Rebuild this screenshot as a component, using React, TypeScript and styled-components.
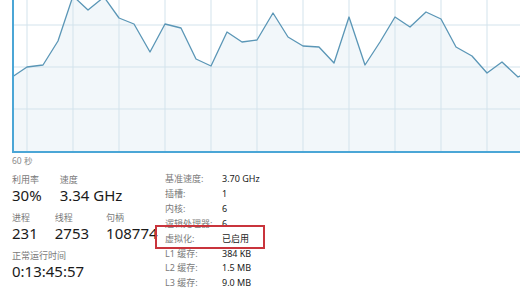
import { type ReactElement } from 'react'
import styled, { createGlobalStyle } from 'styled-components'

const GlobalStyle = createGlobalStyle`
  html, body {
    margin: 0;
    padding: 0;
    background: #ffffff;
    overflow: hidden;
  }
  body {
    width: 520px;
    height: 292px;
    font-family: "Noto Sans", "Noto Sans CJK SC", sans-serif;
  }
`

const Page = styled.div`
  width: 520px;
  height: 292px;
  overflow: hidden;
  background: #ffffff;
`

const ChartBox = styled.div`
  margin-left: 12px;
  width: 510px;
  height: 151px;
  border-left: 2px solid #4ba6d6;
  border-bottom: 2px solid #4ba6d6;
  overflow: hidden;
`

const AxisLabel = styled.div`
  margin: 2px 0 0 12px;
  font-size: 8.5px;
  line-height: 12px;
  color: #8a8a8a;
`

const Details = styled.div`
  display: flex;
  margin-top: 7px;
`

const StatsColumn = styled.div`
  width: 153px;
  margin-left: 12px;
  display: flex;
  flex-direction: column;
  gap: 8px;
`

const StatRow = styled.div<{ $gap: number }>`
  display: flex;
  gap: ${props => props.$gap}px;
`

const Stat = styled.div`
  display: flex;
  flex-direction: column;
`

const StatLabel = styled.div`
  font-size: 9px;
  line-height: 12px;
  color: #7a7a7a;
`

const StatValue = styled.div`
  font-size: 15px;
  line-height: 18px;
  color: #1a1a1a;
`

const SpecGrid = styled.div`
  margin-top: -2px;
  display: grid;
  grid-template-columns: 57px auto;
  align-content: start;
`

const SpecRow = styled.div`
  display: contents;
`

const SpecLabel = styled.div<{ $marked?: boolean }>`
  position: relative;
  font-size: 9px;
  line-height: 14.9px;
  color: #7a7a7a;

  ${props => props.$marked && `
    &::after {
      content: '';
      position: absolute;
      left: -10px;
      top: -7px;
      width: 106px;
      height: 20px;
      border: 2px solid #c9343c;
    }
  `}
`

const SpecValue = styled.div`
  font-size: 9px;
  line-height: 14.9px;
  color: #1a1a1a;
`

const points: [number, number][] = [
  [12, 77], [27, 67], [43, 65], [58, 41], [73, -4], [88, 10], [104, -3],
  [119, 18], [134, 24], [150, 52], [165, 24], [181, 28], [196, 59], [211, 66],
  [227, 32], [242, 42], [257, 40], [273, 13], [288, 37], [303, 46], [319, 47],
  [334, 63], [349, 17], [365, 65], [380, 42], [395, 17], [410, 27], [426, 12],
  [441, 19], [456, 47], [472, 56], [487, 73], [502, 62], [518, 77], [533, 70],
]

function CpuChart(): ReactElement {
  const ox = 14
  const pts = points.map(([x, y]) => `${x - ox},${y}`).join(' ')
  const vLines = [27, 73, 119, 165, 211, 257, 303, 349, 395, 441, 487]
  const hLines = [25, 67, 109]

  return (
    <svg width="508" height="151" viewBox="0 0 508 151">
      <polygon
        points={`0,151 ${pts} ${533 - ox},151`}
        fill="#f2f7fa"
      />
      {vLines.map(x => (
        <line key={`v${x}`} x1={x - ox} y1="0" x2={x - ox} y2="151" stroke="#d3e3ec" strokeWidth="1" />
      ))}
      {hLines.map(y => (
        <line key={`h${y}`} x1="0" y1={y} x2="508" y2={y} stroke="#d3e3ec" strokeWidth="1" />
      ))}
      <polyline points={pts} fill="none" stroke="#5a96b6" strokeWidth="1.3" strokeLinejoin="round" />
    </svg>
  )
}

const specs: { label: string, value: string, marked?: boolean }[] = [
  { label: '基准速度:', value: '3.70 GHz' },
  { label: '插槽:', value: '1' },
  { label: '内核:', value: '6' },
  { label: '逻辑处理器:', value: '6' },
  { label: '虚拟化:', value: '已启用', marked: true },
  { label: 'L1 缓存:', value: '384 KB' },
  { label: 'L2 缓存:', value: '1.5 MB' },
  { label: 'L3 缓存:', value: '9.0 MB' },
]

function App(): ReactElement {
  return (
    <Page>
      <GlobalStyle />
      <ChartBox>
        <CpuChart />
      </ChartBox>
      <AxisLabel>60 秒</AxisLabel>
      <Details>
        <StatsColumn>
          <StatRow $gap={18}>
            <Stat>
              <StatLabel>利用率</StatLabel>
              <StatValue>30%</StatValue>
            </Stat>
            <Stat>
              <StatLabel>速度</StatLabel>
              <StatValue>3.34 GHz</StatValue>
            </Stat>
          </StatRow>
          <StatRow $gap={17}>
            <Stat>
              <StatLabel>进程</StatLabel>
              <StatValue>231</StatValue>
            </Stat>
            <Stat>
              <StatLabel>线程</StatLabel>
              <StatValue>2753</StatValue>
            </Stat>
            <Stat>
              <StatLabel>句柄</StatLabel>
              <StatValue>108774</StatValue>
            </Stat>
          </StatRow>
          <Stat>
            <StatLabel>正常运行时间</StatLabel>
            <StatValue>0:13:45:57</StatValue>
          </Stat>
        </StatsColumn>
        <SpecGrid>
          {specs.map(s => (
            <SpecRow key={s.label}>
              <SpecLabel $marked={s.marked}>{s.label}</SpecLabel>
              <SpecValue>{s.value}</SpecValue>
            </SpecRow>
          ))}
        </SpecGrid>
      </Details>
    </Page>
  )
}

export default App
